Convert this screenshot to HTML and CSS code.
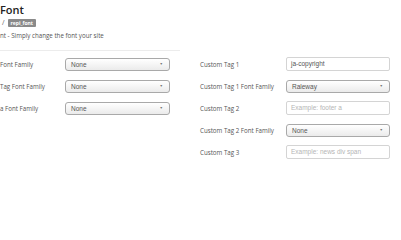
FILE: index.html
```html
<!DOCTYPE html>
<html>
<head>
<meta charset="utf-8">
<link rel="stylesheet" href="styles.css">
</head>
<body>
<div class="page">
  <div class="title">Font</div>
  <div class="crumb"><span class="slash">/</span><span class="badge">repi_font</span></div>
  <div class="desc">nt - Simply change the font your site</div>
  <div class="divider"></div>
  <div class="form">
    <div class="col left">
      <div class="row"><span class="label">Font Family</span><div class="select">None<span class="arrow">&#9660;</span></div></div>
      <div class="row"><span class="label">Tag Font Family</span><div class="select">None<span class="arrow">&#9660;</span></div></div>
      <div class="row"><span class="label">a Font Family</span><div class="select">None<span class="arrow">&#9660;</span></div></div>
    </div>
    <div class="col right">
      <div class="row"><span class="label">Custom Tag 1</span><div class="input">ja-copyright</div></div>
      <div class="row"><span class="label">Custom Tag 1 Font Family</span><div class="select wide">Raleway<span class="arrow">&#9660;</span></div></div>
      <div class="row"><span class="label">Custom Tag 2</span><div class="input ph">Example: footer a</div></div>
      <div class="row"><span class="label">Custom Tag 2 Font Family</span><div class="select wide">None<span class="arrow">&#9660;</span></div></div>
      <div class="row"><span class="label">Custom Tag 3</span><div class="input ph">Example: news div span</div></div>
    </div>
  </div>
</div>
</body>
</html>
```
FILE: styles.css
```css
html, body { margin: 0; padding: 0; background: #fff; }
body { font-family: "Open Sans", Lato, sans-serif; color: #444; width: 401px; height: 201px; overflow: hidden; }
.page { display: flex; flex-direction: column; }
.title { font-size: 11px; font-weight: 600; line-height: 14px; margin-top: 3px; color: #222; }
.crumb { display: flex; align-items: center; height: 8px; margin-top: 2px; }
.slash { font-size: 7px; color: #666; margin-left: 2px; margin-right: 3px; line-height: 8px; }
.badge { background: #8a8a8a; color: #fff; font-size: 5px; font-weight: 700; line-height: 8px; padding: 0 3px; border-radius: 1px; }
.desc { margin-top: 4px; font-size: 6.2px; line-height: 10px; color: #555; }
.divider { margin-top: 9px; width: 180px; border-top: 1px solid #ececec; }
.form { margin-top: 6px; display: flex; }
.col { display: flex; flex-direction: column; gap: 8px; }
.left { width: 200px; }
.row { display: flex; align-items: center; height: 14px; }
.label { font-size: 6.2px; color: #555; font-weight: 400; }
.left .label { width: 65px; }
.right .label { width: 86px; }
.select { box-sizing: border-box; position: relative; height: 13px; margin-top: 1px; border: 1px solid #a9a9a9; border-radius: 3px; background: linear-gradient(#ffffff, #ebebeb); font-family: "Liberation Sans", Arial, sans-serif; font-size: 6.5px; color: #555; line-height: 11px; padding-left: 5px; width: 105px; }
.select.wide { width: 104px; margin-top: 0; }
.arrow { position: absolute; right: 6px; top: 0; font-size: 3.5px; color: #777; }
.input { box-sizing: border-box; height: 14px; width: 104px; border: 1px solid #d4d4d4; border-radius: 2px; background: #fff; font-family: "Liberation Sans", Arial, sans-serif; font-size: 6.5px; line-height: 12px; padding-left: 4px; color: #555; }
.input.ph { color: #b5b5b5; }
```
